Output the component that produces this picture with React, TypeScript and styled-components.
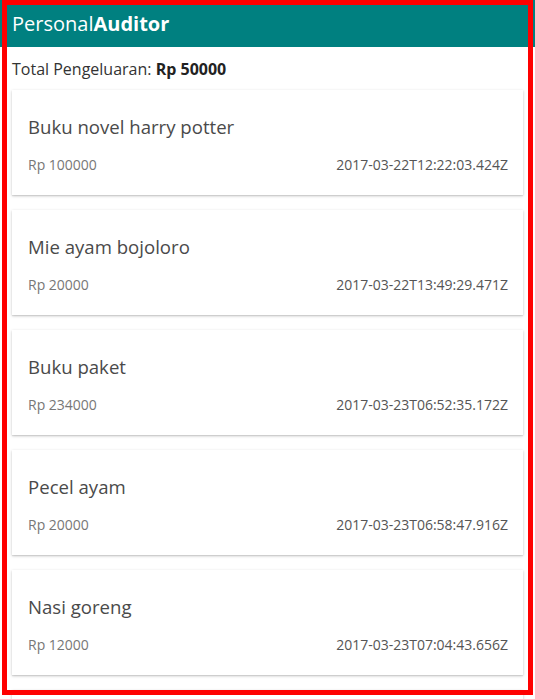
import React from "react";
import styled, { createGlobalStyle } from "styled-components";

const Global = createGlobalStyle`
  html, body { margin: 0; padding: 0; background: #fff; }
  body { font-family: "Open Sans", "Noto Sans", sans-serif; color: #333; overflow: hidden; }
  * { box-sizing: border-box; }
`;

const Page = styled.div`
  position: relative;
  width: 535px;
`;

const Header = styled.header`
  height: 47px;
  background: #008080;
  display: flex;
  align-items: center;
  padding: 0 12px;
`;

const Brand = styled.h1`
  margin: 0;
  font-size: 20px;
  font-weight: 400;
  color: #fff;
  line-height: 1;
  b { font-weight: 700; }
`;

const Total = styled.p`
  margin: 12px 12px 11px;
  font-size: 16px;
  line-height: 20px;
  color: #333;
  b { font-weight: 700; color: #222; }
`;

const List = styled.div`
  display: flex;
  flex-direction: column;
  gap: 15px;
  padding: 0 12px;
`;

const Card = styled.div`
  height: 105px;
  background: #fff;
  box-shadow: 0 1px 3px rgba(0, 0, 0, 0.2), 0 1px 1px rgba(0, 0, 0, 0.08);
  padding: 25px 15px 0 16px;
  display: flex;
  flex-direction: column;
  gap: 16px;
`;

const Title = styled.div`
  font-size: 18.6px;
  line-height: 24px;
  color: #4a4a4a;
  font-weight: 500;
`;

const Meta = styled.div`
  display: flex;
  justify-content: space-between;
  font-size: 14px;
  line-height: 20px;
`;

const Amount = styled.span`
  color: #777;
`;

const Date = styled.span`
  color: #555;
`;

const Frame = styled.div`
  position: absolute;
  left: 2px;
  top: 0;
  width: 531px;
  height: 695px;
  border: 5px solid #ff0000;
  pointer-events: none;
`;

const items = [
  { title: "Buku novel harry potter", amount: "Rp 100000", date: "2017-03-22T12:22:03.424Z" },
  { title: "Mie ayam bojoloro", amount: "Rp 20000", date: "2017-03-22T13:49:29.471Z" },
  { title: "Buku paket", amount: "Rp 234000", date: "2017-03-23T06:52:35.172Z" },
  { title: "Pecel ayam", amount: "Rp 20000", date: "2017-03-23T06:58:47.916Z" },
  { title: "Nasi goreng", amount: "Rp 12000", date: "2017-03-23T07:04:43.656Z" },
  { title: "Es teh", amount: "Rp 3000", date: "2017-03-23T07:10:12.101Z" },
];

export default function App() {
  return (
    <>
      <Global />
      <Page>
        <Header>
          <Brand>
            Personal<b>Auditor</b>
          </Brand>
        </Header>
        <Total>
          Total Pengeluaran: <b>Rp 50000</b>
        </Total>
        <List>
          {items.map((it, i) => (
            <Card key={i}>
              <Title>{it.title}</Title>
              <Meta>
                <Amount>{it.amount}</Amount>
                <Date>{it.date}</Date>
              </Meta>
            </Card>
          ))}
        </List>
        <Frame />
      </Page>
    </>
  );
}
